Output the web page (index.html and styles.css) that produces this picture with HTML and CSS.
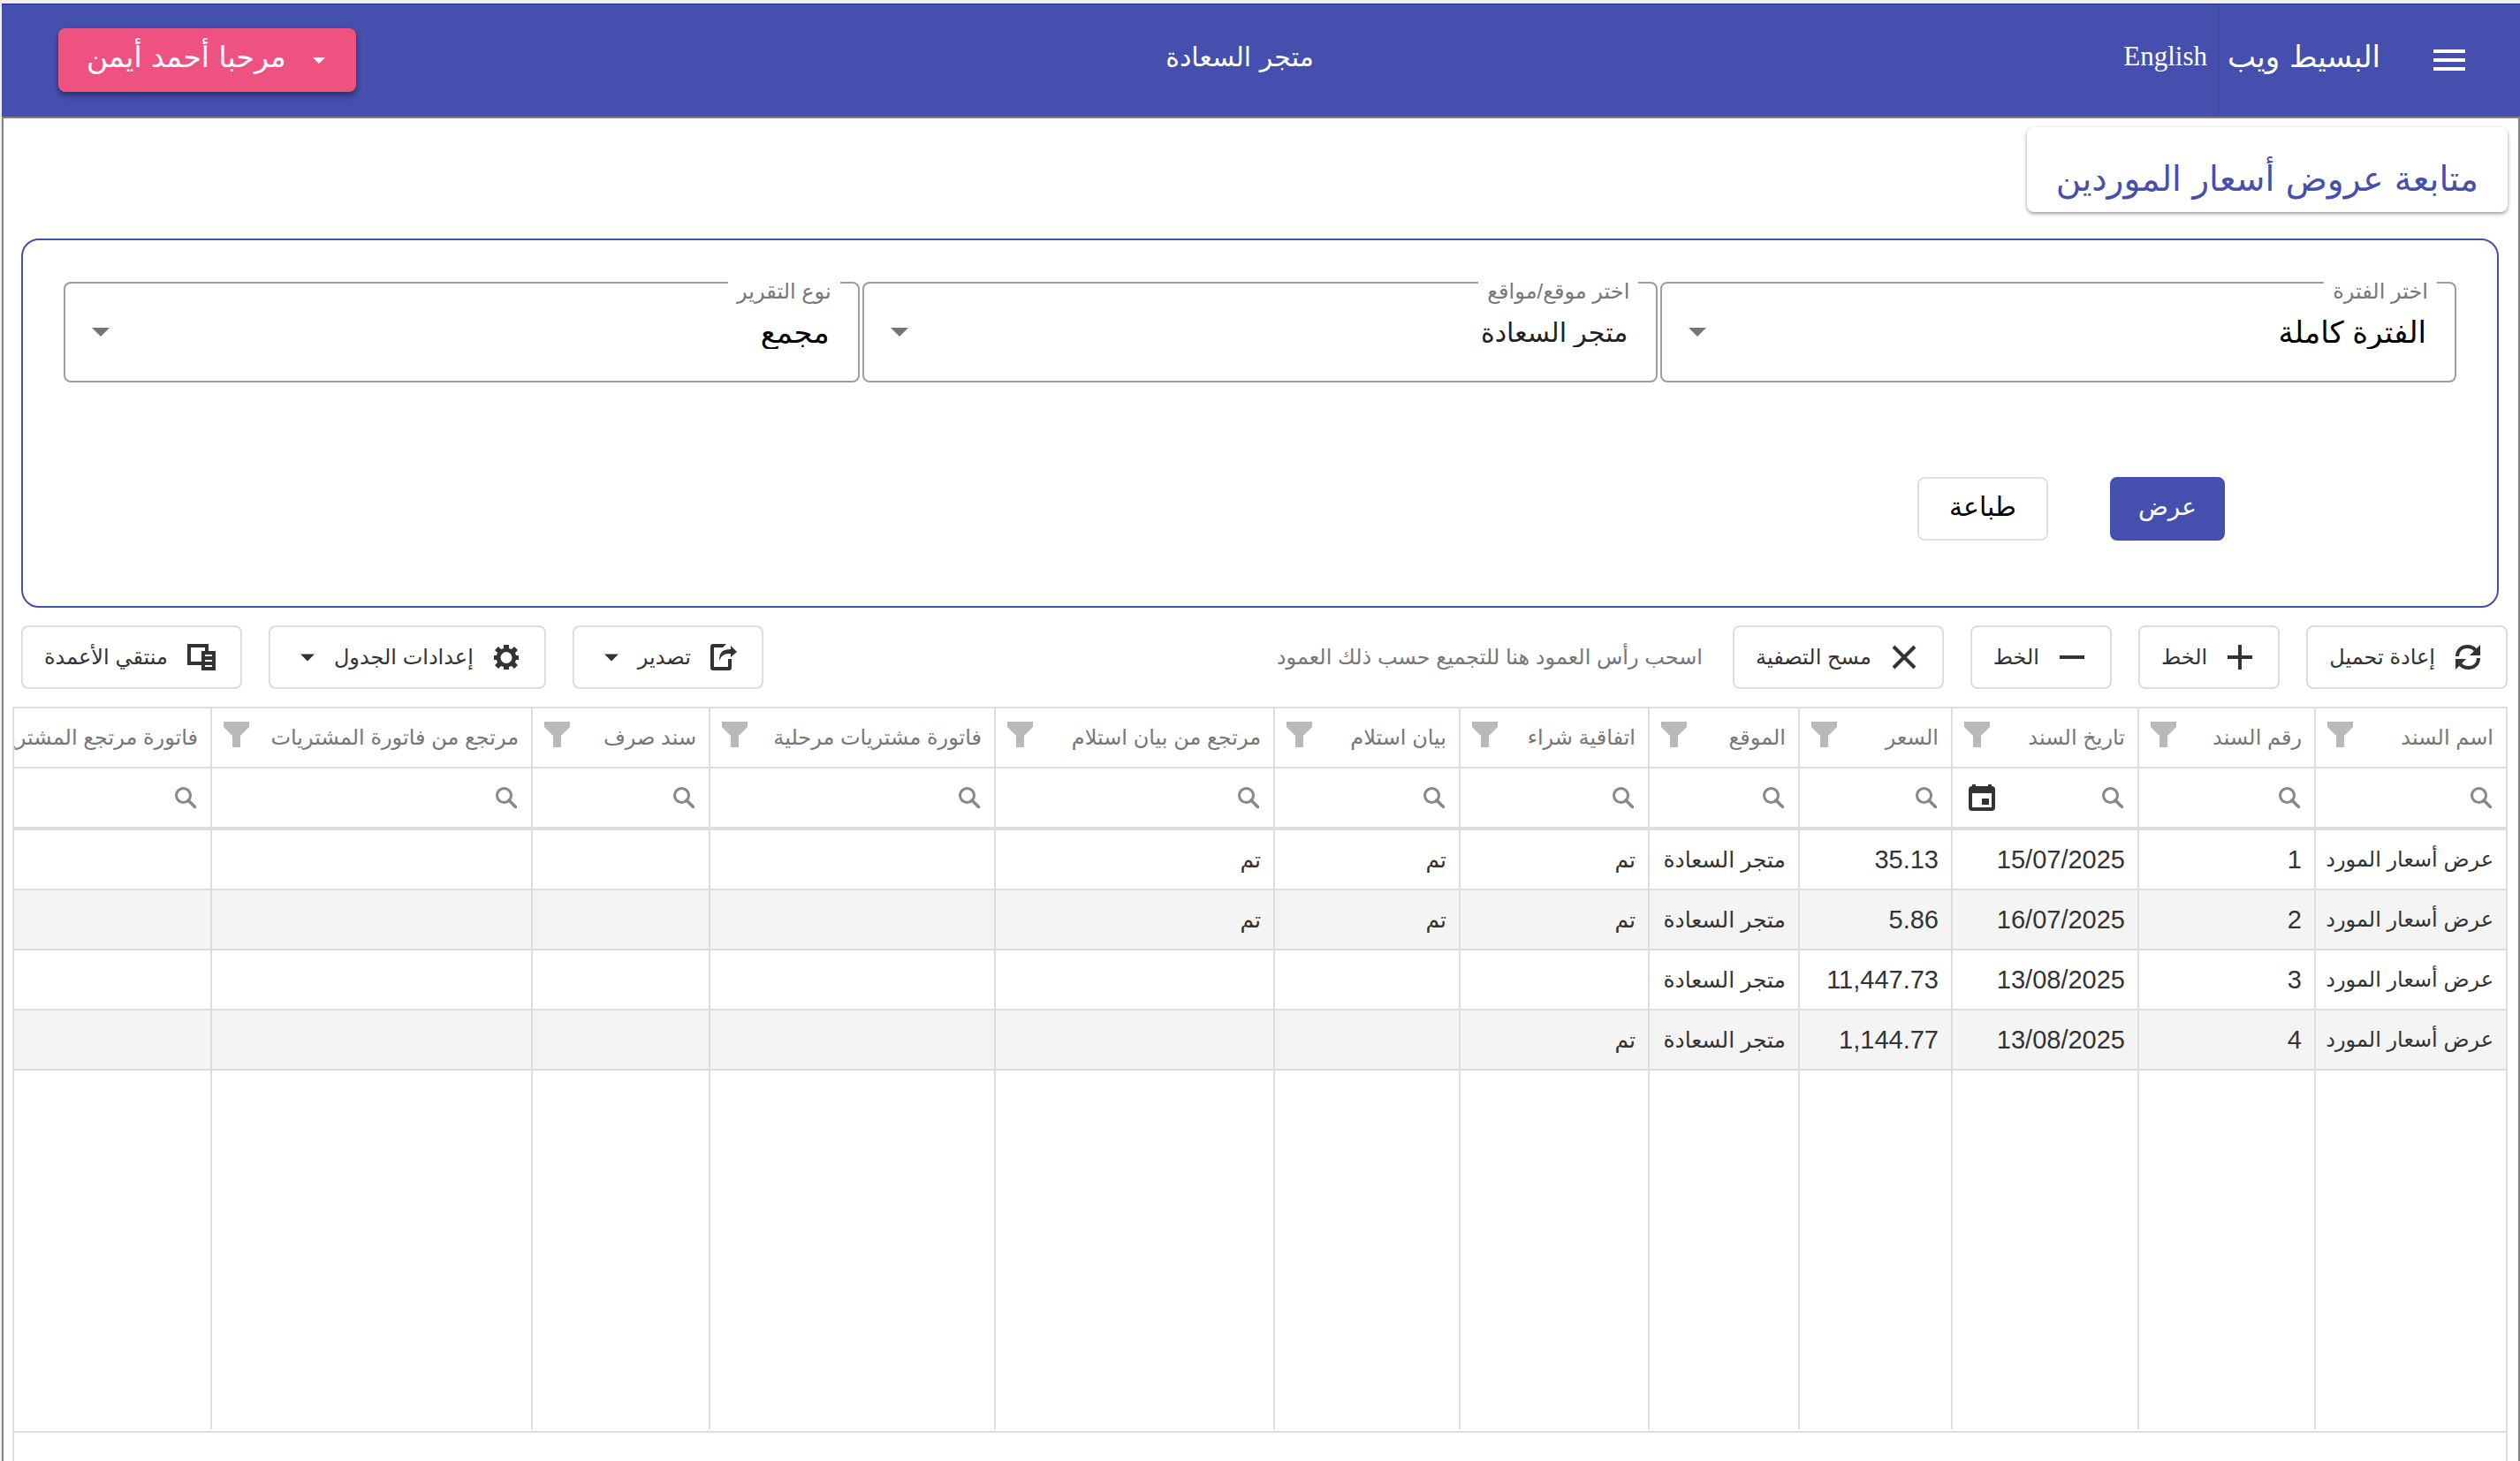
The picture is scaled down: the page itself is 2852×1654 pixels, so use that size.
FILE: index.html
```html
<!DOCTYPE html>
<html lang="ar" dir="rtl">
<head>
<meta charset="utf-8">
<meta name="viewport" content="width=device-width, initial-scale=1">
<title>متابعة عروض أسعار الموردين</title>
<link rel="stylesheet" href="styles.css">
</head>
<body>
<svg class="sprite" aria-hidden="true">
  <symbol id="funnel" viewBox="0 0 29 29"><path d="M0 0h29v6L19 16v13h-9V16L0 6z"/></symbol>
  <symbol id="search" viewBox="0 0 24 24"><circle cx="9.500" cy="9.500" r="8" fill="none" stroke="currentColor" stroke-width="3"/><path d="M15 15l7.500 7.500" fill="none" stroke="currentColor" stroke-width="3.500" stroke-linecap="round"/></symbol>
  <symbol id="caret" viewBox="0 0 20 10"><path d="M0 0h20L10 10z"/></symbol>
</svg>
<div class="app">
  <header class="topbar">
    <div class="start">
      <button class="menu" aria-label="القائمة"><svg viewBox="0 0 24 24"><path d="M3 18h18v-2H3v2zm0-5h18v-2H3v2zm0-7v2h18V6H3z"/></svg></button>
      <a class="brand" href="#">البسيط ويب</a>
      <a class="lang" href="#" lang="en">English</a>
    </div>
    <div class="store">متجر السعادة</div>
    <button class="user"><svg><use href="#caret"/></svg><span>مرحبا أحمد أيمن</span></button>
  </header>
  <main>
    <h1>متابعة عروض أسعار الموردين</h1>
    <form class="panel">
      <div class="fields">
        <div class="field">
          <label for="period">اختر الفترة</label>
          <select id="period"><option>الفترة كاملة</option></select>
          <svg><use href="#caret"/></svg>
        </div>
        <div class="field naskh">
          <label for="site">اختر موقع/مواقع</label>
          <select id="site"><option>متجر السعادة</option></select>
          <svg><use href="#caret"/></svg>
        </div>
        <div class="field">
          <label for="kind">نوع التقرير</label>
          <select id="kind"><option>مجمع</option></select>
          <svg><use href="#caret"/></svg>
        </div>
      </div>
      <div class="actions">
        <button type="button" class="primary">عرض</button>
        <button type="button" class="plain">طباعة</button>
      </div>
    </form>
    <div class="toolbar">
      <button><svg viewBox="0 0 30 30"><path d="M3 14C3 7 8 3 14.500 3c4 0 7 1.500 9 4M27 16c0 7-5 11-11.500 11-4 0-7-1.500-9-4" fill="none" stroke="currentColor" stroke-width="4"/><path d="M29 1v12H17zM1 29V17h12z"/></svg><span>إعادة تحميل</span></button>
      <button><svg viewBox="0 0 30 30"><path d="M13 1h4v12h12v4H17v12h-4V17H1v-4h12z"/></svg><span>الخط</span></button>
      <button><svg viewBox="0 0 30 30"><path d="M1 13h28v4H1z"/></svg><span>الخط</span></button>
      <button><svg viewBox="0 0 30 30"><path d="M3 3l24 24M27 3L3 27" stroke="currentColor" stroke-width="4"/></svg><span>مسح التصفية</span></button>
      <p class="hint">اسحب رأس العمود هنا للتجميع حسب ذلك العمود</p>
      <button class="drop"><svg viewBox="0 0 30 30"><path d="M18 0H3Q0 0 0 3v24q0 3 3 3h18q3 0 3-3V17h-4v9H4V4h10z"/><path d="M10 19C10 9 14 6 23 6V2l7 7-7 6v-4c-7 0-10 1-13 8z"/></svg><span>تصدير</span><svg class="caret"><use href="#caret"/></svg></button>
      <button class="drop"><svg viewBox="0 0 30 30"><path fill-rule="evenodd" d="M12 1h6v4l3 1 3-3 4 4-3 3 1 3h3v5h-3l-1 3 3 3-4 4-3-3-3 1v3h-6v-3l-3-1-3 3-4-4 3-3-1-3H1v-5h3l1-3-3-3 4-4 3 3 3-1zM15 9a6 6 0 1 0 0 13 6 6 0 0 0 0-13z"/></svg><span>إعدادات الجدول</span><svg class="caret"><use href="#caret"/></svg></button>
      <button><svg class="wide" viewBox="0 0 32 30"><path fill-rule="evenodd" d="M0 0h24v8h8v22H16v-6H0zM4 4v16h12V8h4V4zM20 12v2h8v-2zM20 18v2h8v-2zM20 24v2h8v-2z"/></svg><span>منتقي الأعمدة</span></button>
    </div>
    <div class="grid">
      <table>
        <colgroup><col class="c1"><col class="c2"><col class="c3"><col class="c4"><col class="c5"><col class="c6"><col class="c7"><col class="c8"><col class="c9"><col class="c10"><col class="c11"><col></colgroup>
        <thead>
          <tr>
            <th scope="col"><div><span>اسم السند</span><svg><use href="#funnel"/></svg></div></th>
            <th scope="col"><div><span>رقم السند</span><svg><use href="#funnel"/></svg></div></th>
            <th scope="col"><div><span>تاريخ السند</span><svg><use href="#funnel"/></svg></div></th>
            <th scope="col"><div><span>السعر</span><svg><use href="#funnel"/></svg></div></th>
            <th scope="col"><div><span>الموقع</span><svg><use href="#funnel"/></svg></div></th>
            <th scope="col"><div><span>اتفاقية شراء</span><svg><use href="#funnel"/></svg></div></th>
            <th scope="col"><div><span>بيان استلام</span><svg><use href="#funnel"/></svg></div></th>
            <th scope="col"><div><span>مرتجع من بيان استلام</span><svg><use href="#funnel"/></svg></div></th>
            <th scope="col"><div><span>فاتورة مشتريات مرحلية</span><svg><use href="#funnel"/></svg></div></th>
            <th scope="col"><div><span>سند صرف</span><svg><use href="#funnel"/></svg></div></th>
            <th scope="col"><div><span>مرتجع من فاتورة المشتريات</span><svg><use href="#funnel"/></svg></div></th>
            <th scope="col"><div><span>فاتورة مرتجع المشتريات</span></div></th>
          </tr>
          <tr class="filters">
            <td><div><svg><use href="#search"/></svg><input aria-label="اسم السند"></div></td>
            <td><div><svg><use href="#search"/></svg><input aria-label="رقم السند"></div></td>
            <td><div><svg><use href="#search"/></svg><input aria-label="تاريخ السند"><button class="cal" aria-label="التقويم"><svg viewBox="0 0 30 30"><path fill-rule="evenodd" d="M4 2V0h4v2h14V0h4v2q4 0 4 4v20q0 4-4 4H4q-4 0-4-4V6q0-4 4-4zM4 10v16h22V10zM15 16h8v7h-8z"/></svg></button></div></td>
            <td><div><svg><use href="#search"/></svg><input aria-label="السعر"></div></td>
            <td><div><svg><use href="#search"/></svg><input aria-label="الموقع"></div></td>
            <td><div><svg><use href="#search"/></svg><input aria-label="اتفاقية شراء"></div></td>
            <td><div><svg><use href="#search"/></svg><input aria-label="بيان استلام"></div></td>
            <td><div><svg><use href="#search"/></svg><input aria-label="مرتجع من بيان استلام"></div></td>
            <td><div><svg><use href="#search"/></svg><input aria-label="فاتورة مشتريات مرحلية"></div></td>
            <td><div><svg><use href="#search"/></svg><input aria-label="سند صرف"></div></td>
            <td><div><svg><use href="#search"/></svg><input aria-label="مرتجع من فاتورة المشتريات"></div></td>
            <td><div><svg><use href="#search"/></svg><input aria-label="فاتورة مرتجع المشتريات"></div></td>
          </tr>
        </thead>
        <tbody>
          <tr><td>عرض أسعار المورد</td><td>1</td><td>15/07/2025</td><td>35.13</td><td>متجر السعادة</td><td>تم</td><td>تم</td><td>تم</td><td></td><td></td><td></td><td></td></tr>
          <tr><td>عرض أسعار المورد</td><td>2</td><td>16/07/2025</td><td>5.86</td><td>متجر السعادة</td><td>تم</td><td>تم</td><td>تم</td><td></td><td></td><td></td><td></td></tr>
          <tr><td>عرض أسعار المورد</td><td>3</td><td>13/08/2025</td><td>11,447.73</td><td>متجر السعادة</td><td></td><td></td><td></td><td></td><td></td><td></td><td></td></tr>
          <tr><td>عرض أسعار المورد</td><td>4</td><td>13/08/2025</td><td>1,144.77</td><td>متجر السعادة</td><td>تم</td><td></td><td></td><td></td><td></td><td></td><td></td></tr>
          <tr class="filler"><td></td><td></td><td></td><td></td><td></td><td></td><td></td><td></td><td></td><td></td><td></td><td></td></tr>
        </tbody>
      </table>
      <div class="pager"></div>
    </div>
  </main>
</div>
</body>
</html>
```
FILE: styles.css
```css
* { box-sizing: border-box; }
body {
  margin: 0;
  background: #f0f0f0;
  color: #333;
  font-family: "Liberation Sans", "DejaVu Sans", sans-serif;
  font-size: 24px;
}
button, select, input { font: inherit; color: inherit; }
button { cursor: pointer; }
svg { display: block; flex: none; fill: currentColor; }
.sprite { position: absolute; width: 0; height: 0; }
.app {
  display: flex;
  flex-direction: column;
  min-height: 100vh;
  padding: 4px 0 0 2px;
}
.topbar {
  display: flex;
  justify-content: space-between;
  align-items: center;
  height: 128px;
  padding: 0 56px 0 64px;
  background: #454fae;
  box-shadow: inset 0 1px #1f2b8a;
  color: #fff;
  font-family: "DejaVu Sans", sans-serif;
  font-size: 30px;
}
.start { display: flex; align-items: center; height: 100%; }
.start a { color: inherit; text-decoration: none; padding-bottom: 8px; }
.menu { padding: 0; border: 0; background: none; }
.menu svg { width: 48px; height: 48px; }
.start .brand {
  display: flex;
  align-items: center;
  height: 100%;
  margin-right: 54px;
  padding-left: 10px;
  border-left: 1px solid #3a4596;
  font-size: 34px;
}
.lang { margin-right: 12px; font-family: "Liberation Serif", serif; font-size: 31px; }
.store { padding-bottom: 8px; }
.user {
  display: flex;
  align-items: center;
  gap: 30px;
  height: 72px;
  padding: 0 35px 8px 32px;
  border: 0;
  border-radius: 8px;
  background: #ee5281;
  box-shadow: 0 4px 6px rgba(0, 0, 0, .4);
  font-size: 33px;
  white-space: nowrap;
}
.user svg { width: 14px; height: 7px; margin-top: 8px; }
main {
  display: flex;
  flex-direction: column;
  flex: 1;
  border: 2px solid #808080;
  border-bottom: 0;
  background: #fff;
  padding: 10px 12px 0 10px;
}
h1 {
  align-self: flex-start;
  height: 96px;
  margin: 0;
  padding: 0 33px;
  border-radius: 8px;
  box-shadow: 0 2px 4px rgba(0, 0, 0, .4);
  color: #454fae;
  font-family: "DejaVu Sans", sans-serif;
  font-size: 39px;
  font-weight: 400;
  line-height: 118px;
}
.panel {
  height: 418px;
  margin: 30px 10px 0;
  padding: 47px 46px 0;
  border: 2px solid #454fae;
  border-radius: 20px;
}
.fields { display: grid; grid-template-columns: repeat(3, 1fr); gap: 3px; }
.field { position: relative; height: 114px; }
.field label {
  position: absolute;
  top: 0;
  right: 22px;
  padding: 0 10px;
  background: #fff;
  color: #777;
  font-size: 24px;
  line-height: 22px;
}
.field select {
  appearance: none;
  width: 100%;
  height: 100%;
  padding: 0 32px;
  border: 2px solid #9e9e9e;
  border-radius: 8px;
  background: none;
  color: #000;
  font-size: 34px;
}
.field.naskh select { font-size: 30px; color: #222; }
.field svg {
  position: absolute;
  top: 52px;
  left: 32px;
  width: 20px;
  height: 10px;
  color: #757575;
  pointer-events: none;
}
.actions { display: flex; gap: 70px; margin-top: 107px; padding-right: 262px; }
.actions button {
  height: 72px;
  padding: 0 34px 6px;
  border: 2px solid #e0e0e0;
  border-radius: 8px;
  background: #fff;
  color: #000;
  font-size: 30px;
}
.actions .primary { padding: 0 30px 6px; background: #454fae; border-color: #454fae; color: #fff; font-size: 28px; }
.toolbar { display: flex; align-items: center; gap: 30px; margin-top: 20px; padding-left: 10px; }
.toolbar button {
  display: flex;
  align-items: center;
  gap: 22px;
  height: 72px;
  padding: 0 28px 0 24px;
  border: 2px solid #ddd;
  border-radius: 8px;
  background: #fff;
  white-space: nowrap;
}
.toolbar button svg { width: 30px; height: 30px; }
.toolbar button .wide { width: 32px; }
.toolbar button .caret { width: 16px; height: 9px; }
.toolbar .drop { padding-left: 34px; }
.hint { flex: 1; margin: 0; padding-right: 4px; color: #777; white-space: nowrap; }
.grid { flex: 1; margin-top: 20px; border: 2px solid #ddd; border-bottom: 0; overflow: hidden; }
table { width: 100%; table-layout: fixed; border-collapse: separate; border-spacing: 0; }
.c1 { width: 217px; }
.c2 { width: 200px; }
.c3 { width: 211px; }
.c4 { width: 173px; }
.c5 { width: 170px; }
.c6 { width: 214px; }
.c7 { width: 210px; }
.c8 { width: 316px; }
.c9 { width: 323px; }
.c10 { width: 201px; }
.c11 { width: 363px; }
th, td {
  height: 68px;
  padding: 0 14px 0 0;
  border-left: 2px solid #ddd;
  border-bottom: 2px solid #ddd;
  font-weight: 400;
  text-align: right;
  white-space: nowrap;
  overflow: hidden;
}
th:last-child, td:last-child { border-left: 0; }
th { color: #777; }
th div { display: flex; align-items: center; justify-content: space-between; padding-left: 13px; }
th:last-child div { padding-left: 0; }
th svg { width: 29px; height: 29px; margin-bottom: 8px; color: #b9b9b9; }
.filters td { height: 70px; padding-right: 16px; border-bottom-width: 4px; }
.filters div { display: flex; align-items: center; }
.filters svg { width: 24px; height: 24px; color: #888; }
.filters input { flex: 1; width: 0; min-width: 0; height: 40px; padding: 0 8px; border: 0; outline: 0; background: none; }
.cal { margin-left: 18px; padding: 0; border: 0; background: none; }
.filters .cal svg { width: 30px; height: 30px; color: #333; }
tbody td:nth-child(n+2) { font-size: 29px; }
tbody td:nth-child(n+5) { font-size: 25px; }
tbody tr:nth-child(even) td { background: #f4f4f4; }
.filler td { height: 406px; border-bottom: 0; }
.pager { height: 34px; margin-top: 2px; border-top: 2px solid #ddd; }
```
